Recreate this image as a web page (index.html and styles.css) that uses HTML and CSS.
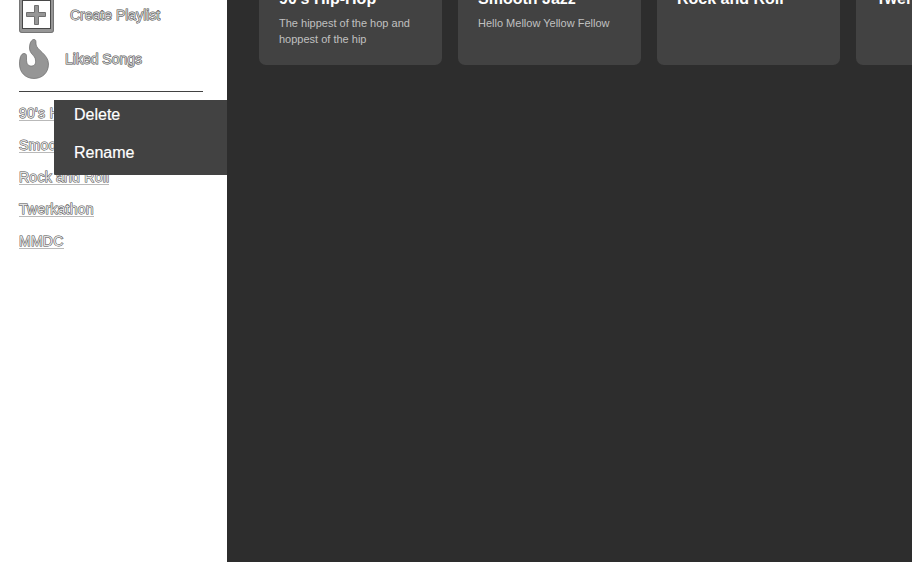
FILE: index.html
```html
<!DOCTYPE html>
<html lang="en">
<head>
<meta charset="utf-8">
<title>Playlists</title>
<link rel="stylesheet" href="styles.css">
</head>
<body>
<div class="app">
  <aside class="sidebar">
    <div class="action create">
      <svg width="35" height="35" viewBox="0 0 35 35"><rect x="0" y="-3" width="35" height="36" rx="3" fill="#969696"/><rect x=".5" y="-2.500" width="34" height="35" rx="2.500" fill="none" stroke="#757575"/><rect x="3.500" y=".5" width="28" height="28" fill="#fff" stroke="#484848"/><path d="M15.500 5.500h4v7h7v4h-7v8h-4v-8h-8v-4h8z" fill="#969696" stroke="#707070" stroke-linejoin="round"/></svg>
      <span class="outlined">Create Playlist</span>
    </div>
    <div class="action liked">
      <svg width="30" height="40" viewBox="0 0 30 40"><path d="M14 .5C17 0 17 2 17 5C17 11 29.500 15 29.500 25C29.500 34 23 39.500 15 39.500C6 39.500 .5 33 .5 25C.5 19 2 14.500 5 14.500C8 14.500 7.500 17 7.500 20C7.500 25 9 27 12.500 27C16 27 17 24 16.500 21C16 16 10.500 15 10.500 9C10.500 5 11.500 2 14 .5Z" fill="#969696" stroke="#686868" stroke-width=".7"/></svg>
      <span class="outlined">Liked Songs</span>
    </div>
    <hr class="divider">
    <nav class="playlists">
      <a class="outlined">90's Hip-Hop</a>
      <a class="outlined">Smooth Jazz</a>
      <a class="outlined">Rock and Roll</a>
      <a class="outlined">Twerkathon</a>
      <a class="outlined">MMDC</a>
    </nav>
    <div class="menu">
      <div>Delete</div>
      <div>Rename</div>
    </div>
  </aside>
  <main class="content">
    <article class="card"><h2>90's Hip-Hop</h2><p>The hippest of the hop and hoppest of the hip</p></article>
    <article class="card"><h2>Smooth Jazz</h2><p>Hello Mellow Yellow Fellow</p></article>
    <article class="card"><h2>Rock and Roll</h2></article>
    <article class="card"><h2>Twerkathon</h2></article>
  </main>
</div>
</body>
</html>
```
FILE: styles.css
```css
* { box-sizing: border-box; }
body { margin: 0; overflow: hidden; font-family: "Liberation Sans", Arial, sans-serif; }
.app { display: flex; height: 562px; overflow: hidden; background: #2d2d2d; }
.sidebar { position: relative; flex: 0 0 227px; padding: 0 24px 0 19px; background: #fff; }
.action { display: flex; gap: 16px; font-size: 14px; line-height: 16px; }
.action svg { display: block; flex: none; }
.create { height: 39px; }
.create span { margin-top: 7px; }
.liked { height: 52px; }
.liked span { margin-top: 12px; }
.outlined { color: #d0d0d0; -webkit-text-stroke: 1px #484848; paint-order: stroke fill; opacity: 0.99; }
.divider { height: 1px; margin: 0; border: 0; background: #424242; }
.playlists { display: flex; flex-direction: column; align-items: flex-start; gap: 16px; padding-top: 13px; font-size: 14px; line-height: 16px; }
.playlists a { height: 16px; color: #e4e4e4; letter-spacing: 0.25px; box-shadow: inset 0 -1px #b9b9b9; }
.menu { position: absolute; z-index: 1; top: 100px; left: 54px; width: 173px; height: 75px; padding: 6px 20px 0; background: #424242; border-radius: 0 0 0 1px; color: #fff; -webkit-text-stroke: 0.2px #fff; font-size: 16px; line-height: 18px; }
.menu div + div { margin-top: 20px; }
.content { display: flex; flex: 1; gap: 16px; min-width: 0; padding-left: 32px; overflow: hidden; }
.card { flex: 0 0 183px; height: 65px; padding: 0 20px; border-radius: 0 0 7px 7px; background: #424242; overflow: hidden; }
.card h2 { margin: -10px 0 0; color: #fff; font-size: 16px; line-height: 18px; white-space: nowrap; }
.card p { margin: 7px 0 0; color: #c0c0c0; font-size: 11px; line-height: 16px; }
```
